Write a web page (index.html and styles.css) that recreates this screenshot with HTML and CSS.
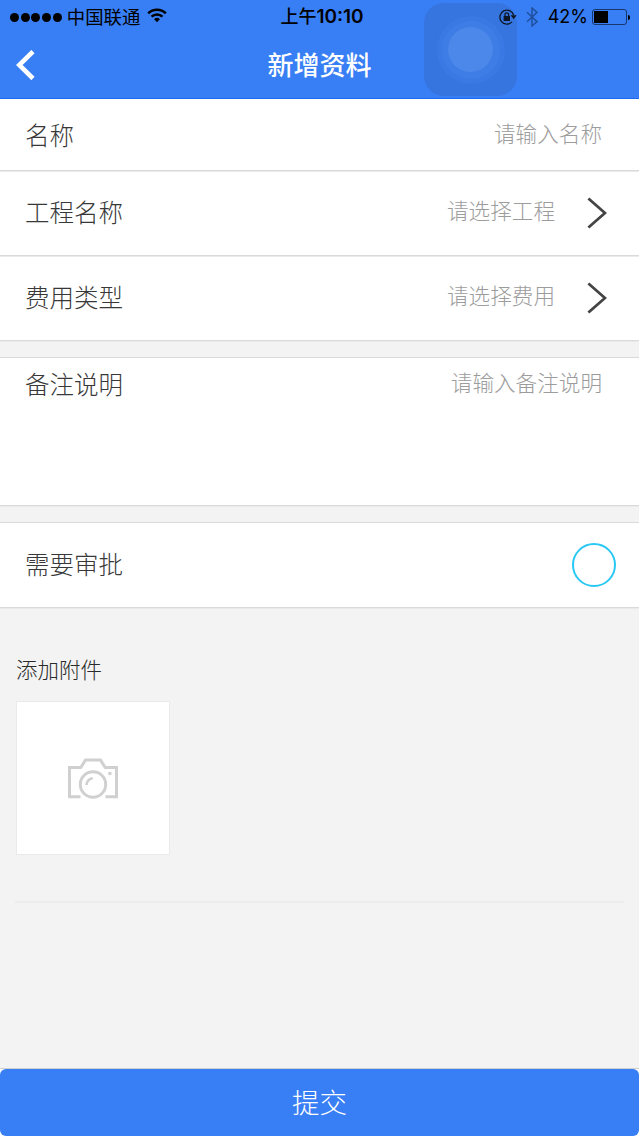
FILE: index.html
```
<!DOCTYPE html>
<html lang="zh-CN">
<head>
    <meta charset="UTF-8">
    <title>新增资料</title>
    <link rel="stylesheet" href="styles.css">
</head>
<body>
    <div class="page">
        <div class="header">
            <div class="status">
                <div class="status-left">
                    <ul class="signal">
                        <li></li>
                        <li></li>
                        <li></li>
                        <li></li>
                        <li></li>
                    </ul>
                    <span class="carrier">中国联通</span>
                    <svg class="wifi" width="20" height="15" viewBox="0 0 20 15" fill="none" stroke="#000">
                        <path d="M1.2 5.3a12.4 12.4 0 0 1 17.6 0" stroke-width="2.5"/>
                        <path d="M4.5 8.7a7.8 7.8 0 0 1 11 0" stroke-width="2.4"/>
                        <path d="M10 14.2l-2.9-2.9a4.1 4.1 0 0 1 5.8 0z" fill="#000" stroke="none"/>
                    </svg>
                </div>
                <div class="time">上午<b>10:10</b></div>
                <div class="status-right">
                    <svg class="lock" width="18" height="16" viewBox="0 0 18 16">
                        <path d="M14.6 6A7 7 0 1 0 13 12.9" fill="none" stroke="#000" stroke-width="1.3"/>
                        <path d="M11.6 6.3h6l-3 3.9z"/>
                        <path d="M4.6 7h6.4v5H4.6z"/>
                        <path d="M6 7.5V5.6a1.8 1.8 0 0 1 3.6 0v1.9" fill="none" stroke="#000" stroke-width="1.3"/>
                    </svg>
                    <svg class="bluetooth" width="12" height="20" viewBox="0 0 12 20" fill="none" stroke="#20509f" stroke-width="1.5">
                        <path d="M1 5.2l10 9.4L6 19V1l5 4.4L1 14.8"/>
                    </svg>
                    <span class="percent">42%</span>
                    <div class="battery"><div class="level"></div></div>
                    <div class="battery-cap"></div>
                </div>
            </div>
            <div class="nav">
                <svg class="back" width="19" height="30" viewBox="0 0 19 30" fill="none" stroke="#fff" stroke-width="4.6">
                    <path d="M17 1.5L3.2 15 17 28.5"/>
                </svg>
                <h1 class="title">新增资料</h1>
            </div>
            <div class="touch"><div class="ring"><div class="ring-mid"><div class="dot"></div></div></div></div>
        </div>

        <div class="group">
            <div class="item item-name">
                <span class="label">名称</span>
                <span class="hint">请输入名称</span>
            </div>
            <div class="item">
                <span class="label">工程名称</span>
                <span class="hint">请选择工程</span>
                <svg class="arrow" width="20" height="32" viewBox="0 0 20 32" fill="none" stroke="#444" stroke-width="2.8">
                    <path d="M1.4 1.5L18 16 1.4 30.5"/>
                </svg>
            </div>
            <div class="item">
                <span class="label">费用类型</span>
                <span class="hint">请选择费用</span>
                <svg class="arrow" width="20" height="32" viewBox="0 0 20 32" fill="none" stroke="#444" stroke-width="2.8">
                    <path d="M1.4 1.5L18 16 1.4 30.5"/>
                </svg>
            </div>
        </div>

        <div class="group group-line">
            <div class="item item-remark">
                <span class="label">备注说明</span>
                <span class="hint">请输入备注说明</span>
            </div>
        </div>

        <div class="group group-line">
            <div class="item item-check">
                <span class="label">需要审批</span>
                <span class="circle"></span>
            </div>
        </div>

        <div class="attach">
            <p>添加附件</p>
            <div class="upload">
                <svg width="50" height="41" viewBox="0 0 50 41" fill="none" stroke="#d0d0d0" stroke-width="3">
                    <path d="M12.5 38.8h-11V9.5h11.3L17.5 2h15l4.7 7.5h11.3v29.3h-11"/>
                    <circle cx="25" cy="26.5" r="12.7"/>
                    <path d="M18.5 27a6.7 6.7 0 0 1 6.3-6.7" stroke-width="2.6"/>
                    <path d="M40.3 15.5h3.2" stroke-width="3.2"/>
                </svg>
            </div>
        </div>

        <div class="footer">
            <div class="submit">提交</div>
        </div>
    </div>
</body>
</html>
```
FILE: styles.css
```
* {
    margin: 0;
    padding: 0;
    box-sizing: border-box;
}
body {
    font-family: "Noto Sans CJK SC", sans-serif;
    font-weight: 300;
    background-color: #f3f3f3;
}
ul {
    list-style: none;
}
svg {
    display: block;
    flex-shrink: 0;
}
.page {
    display: flex;
    flex-direction: column;
    width: 639px;
    height: 1136px;
    overflow: hidden;
}

/* header */
.header {
    position: relative;
    height: 99px;
    background-color: #387ef5;
    border-bottom: 1px solid #1c69ef;
}
.status {
    display: grid;
    grid-template-columns: 1fr auto 1fr;
    align-items: center;
    height: 32px;
    padding: 0 9px 0 10px;
    color: #000;
    font-size: 18px;
    line-height: 32px;
}
.status-left,
.status-right {
    display: flex;
    align-items: center;
}
.signal {
    display: flex;
    gap: 1.7px;
    margin-right: 5px;
}
.signal li {
    width: 9px;
    height: 9px;
    border-radius: 50%;
    background-color: #000;
}
.carrier {
    padding-bottom: 2px;
    font-size: 18.4px;
    font-weight: 400;
    line-height: 30px;
}
.wifi {
    margin-left: 7px;
    margin-bottom: 3px;
}
.time {
    padding: 0 0 2px 4px;
    font-weight: 500;
    font-size: 18px;
    line-height: 30px;
}
.time b {
    font-family: Inter, sans-serif;
    font-weight: 600;
    font-size: 19px;
}
.status-right {
    justify-content: flex-end;
}
.bluetooth {
    margin-left: 9px;
}
.percent {
    margin-left: 10px;
    font-family: Inter, sans-serif;
    font-weight: 400;
    font-size: 18px;
}
.battery {
    width: 35px;
    height: 16px;
    margin-left: 4px;
    padding: 1px;
    border: 1px solid #17386e;
    border-radius: 3px;
}
.battery .level {
    width: 14px;
    height: 12px;
    background-color: #000;
}
.battery-cap {
    width: 2px;
    height: 5px;
    margin-left: 1px;
    border-radius: 0 2px 2px 0;
    background-color: #000;
}
.nav {
    display: grid;
    grid-template-columns: 34px 1fr 34px;
    align-items: center;
    height: 66px;
}
.back {
    margin-left: 16px;
}
.title {
    padding-bottom: 2px;
    color: #fff;
    font-size: 26px;
    font-weight: 500;
    line-height: 64px;
    text-align: center;
}

/* floating touch button over the header */
.touch {
    position: absolute;
    top: 3px;
    left: 424px;
    display: flex;
    align-items: center;
    justify-content: center;
    width: 93px;
    height: 93px;
    border-radius: 20px;
    background-color: rgba(50, 90, 160, .24);
}
.ring,
.ring-mid,
.dot {
    display: flex;
    align-items: center;
    justify-content: center;
    border-radius: 50%;
}
.ring {
    width: 68px;
    height: 68px;
    background-color: rgba(90, 150, 255, .12);
}
.ring-mid {
    width: 58px;
    height: 58px;
    background-color: rgba(100, 160, 255, .12);
}
.dot {
    width: 45px;
    height: 45px;
    background-color: #4b88e9;
}

/* form */
.group {
    background-color: #fff;
}
.group-line {
    margin-top: 16px;
    border-top: 1px solid #dadada;
}
.item {
    display: flex;
    align-items: center;
    height: 85px;
    padding: 0 32px 0 25px;
    border-bottom: 1px solid #dadada;
    box-shadow: 0 1px 0 #eaeaea;
}
.label {
    flex: 1;
    padding-bottom: 3px;
    color: #383838;
    font-size: 24.5px;
    line-height: 36px;
}
.hint {
    padding-bottom: 7px;
    color: #9c9c9c;
    font-size: 21.6px;
    line-height: 32px;
}
.arrow {
    margin-left: 32px;
}
.item-name {
    height: 72px;
    padding-right: 37px;
}
.item-name .label {
    padding-bottom: 0;
}
.item-name .hint {
    padding-bottom: 4px;
}
.item-remark {
    align-items: flex-start;
    height: 148px;
    padding-top: 8px;
    padding-right: 37px;
}
.item-check {
    padding-right: 23px;
}
.circle {
    width: 44px;
    height: 44px;
    border: 2px solid #2ac8f5;
    border-radius: 50%;
}

/* attachment */
.attach {
    flex: 1;
    padding: 45px 15px 0;
}
.attach p {
    padding-left: 1px;
    color: #2a2a2a;
    font-size: 21.5px;
    line-height: 32px;
}
.upload {
    display: flex;
    align-items: center;
    justify-content: center;
    width: 154px;
    height: 154px;
    margin: 16px 0 0 1px;
    border: 1px solid #eaeaea;
    background-color: #fff;
}
.attach::after {
    content: "";
    display: block;
    height: 2px;
    margin-top: 46px;
    background-color: #ececec;
}
.footer {
    height: 68px;
    border-top: 1px solid #cfcfcf;
    background-color: #fff;
}
.submit {
    height: 67px;
    border-radius: 6px;
    background-color: #387ef5;
    color: #fff;
    font-size: 27.5px;
    line-height: 64px;
    text-align: center;
}
```
